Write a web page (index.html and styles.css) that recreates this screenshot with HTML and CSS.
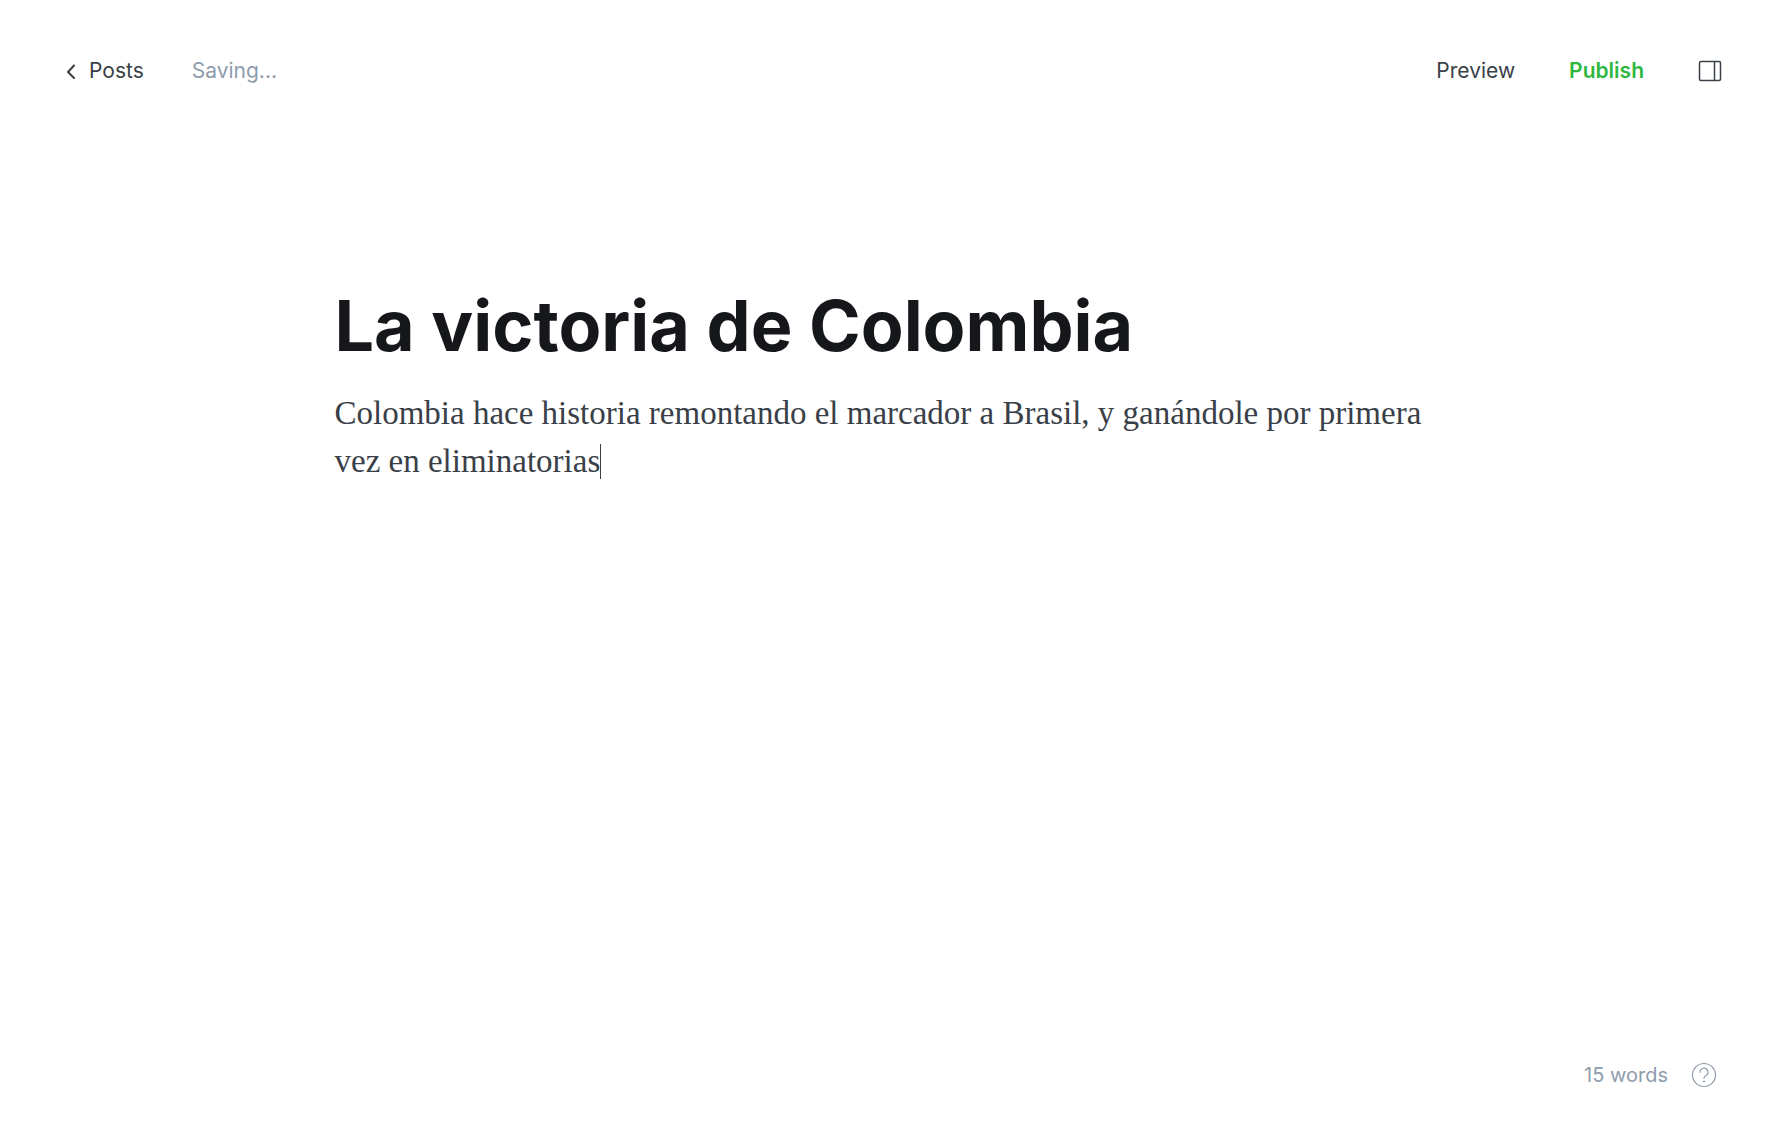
FILE: index.html
```html
<!DOCTYPE html>
<html lang="es">
<head>
<meta charset="utf-8">
<meta name="viewport" content="width=device-width, initial-scale=1">
<title>La victoria de Colombia</title>
<link rel="stylesheet" href="styles.css">
</head>
<body>
<div class="editor">
  <header class="toolbar">
    <div class="toolbar-group">
      <a class="back-link" href="#posts">
        <svg class="back-icon" viewBox="0 0 10 16" aria-hidden="true"><path d="M8 2.500 2 9l6 6"/></svg>
        <span>Posts</span>
      </a>
      <span class="status" role="status">Saving...</span>
    </div>
    <div class="toolbar-group actions">
      <button class="button" type="button">Preview</button>
      <button class="button publish" type="button">Publish</button>
      <button class="button" type="button" aria-label="Settings">
        <svg class="panel-icon" viewBox="0 0 24 22" aria-hidden="true"><rect x="1.5" y="1.5" width="21" height="19" rx="1.5"/><path d="M16.5 1.5v19"/></svg>
      </button>
    </div>
  </header>
  <main class="content">
    <input class="title" type="text" aria-label="Post title" value="La victoria de Colombia">
    <div class="post-body" contenteditable="true" role="textbox" aria-label="Post body" spellcheck="false"><p class="paragraph">Colombia hace historia remontando el marcador a Brasil, y ganándole por primera vez en eliminatorias<span class="caret"></span></p></div>
  </main>
  <footer class="footer">
    <span>15 words</span>
    <a class="help-link" href="#help" aria-label="Help">
      <svg class="help-icon" viewBox="0 0 26 26" aria-hidden="true"><circle cx="13" cy="13" r="11.5"/><path d="M9 10.3a4 4 0 1 1 6 3.3C13.6 14.4 13 15 13 16.3"/><circle class="help-dot" cx="13" cy="19.5" r="1"/></svg>
    </a>
  </footer>
</div>
</body>
</html>
```
FILE: styles.css
```css
* {
  box-sizing: border-box;
}

body {
  margin: 0;
  background: #fff;
  color: #394047;
  font-family: Inter, "Liberation Sans", sans-serif;
  font-size: 20px;
  line-height: 28px;
}

.editor {
  display: flex;
  flex-direction: column;
  min-height: 100vh;
}

.toolbar {
  display: flex;
  justify-content: space-between;
  align-items: center;
  padding: 57px 57px 0 66px;
  font-size: 21px;
}

.toolbar-group {
  display: flex;
  align-items: center;
  gap: 48px;
}

.actions {
  gap: 54px;
}

.back-link {
  display: flex;
  align-items: center;
  gap: 13px;
  color: #394047;
  text-decoration: none;
}

.back-icon {
  width: 10px;
  height: 16px;
  fill: none;
  stroke: #394047;
  stroke-width: 2;
  stroke-linecap: round;
  stroke-linejoin: round;
}

.status {
  color: #8e9cac;
}

.button {
  display: flex;
  padding: 0;
  border: 0;
  background: none;
  color: #394047;
  font: inherit;
  cursor: pointer;
}

.publish {
  color: #30b740;
  font-weight: 600;
}

.panel-icon {
  width: 24px;
  height: 22px;
  fill: none;
  stroke: #394047;
  stroke-width: 1.5;
}

.content {
  flex: 1;
  width: 100%;
  max-width: 1110px;
  margin: 0 auto;
  padding-top: 196px;
}

.title {
  display: block;
  width: 100%;
  height: 90px;
  padding: 0;
  border: 0;
  outline: 0;
  background: none;
  color: #15171a;
  font: 700 70px/90px Inter, "Liberation Sans", sans-serif;
}

.post-body {
  margin-top: 18px;
  outline: 0;
  font-family: Georgia, "Liberation Serif", serif;
  font-size: 33px;
  line-height: 48px;
}

.paragraph {
  margin: 0;
}

.caret {
  display: inline-block;
  width: 1px;
  height: 35px;
  background: #394047;
  vertical-align: -7px;
}

.footer {
  display: flex;
  justify-content: flex-end;
  align-items: center;
  gap: 23px;
  padding: 0 62px 56px;
  color: #8e9cac;
}

.help-link {
  display: flex;
}

.help-icon {
  width: 26px;
  height: 26px;
  fill: none;
  stroke: #8e9cac;
  stroke-width: 1.2;
  stroke-linecap: round;
}

.help-dot {
  fill: #8e9cac;
  stroke: none;
}
```
